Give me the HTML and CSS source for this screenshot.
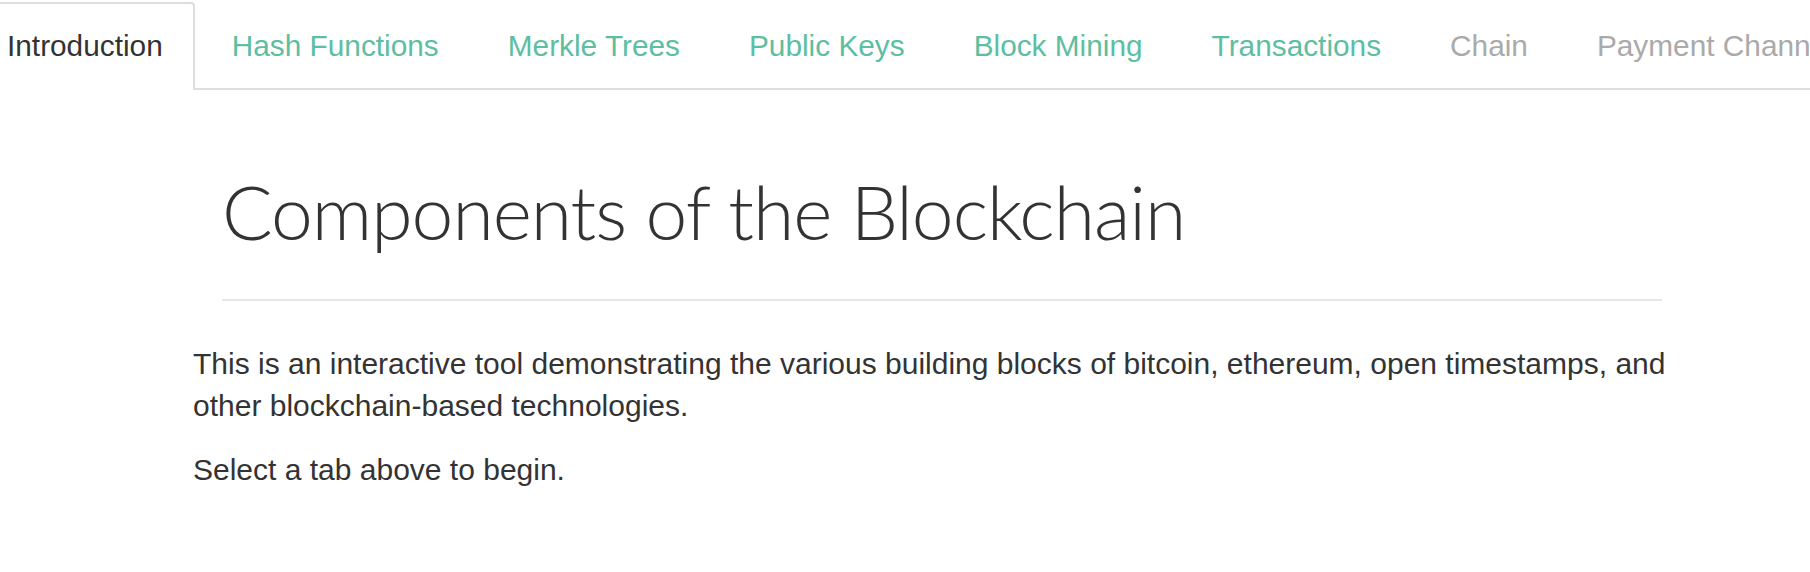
FILE: index.html
```html
<!DOCTYPE html>
<html lang="en">
<head>
  <meta charset="UTF-8">
  <meta name="viewport" content="width=device-width, initial-scale=1.0">
  <title>Blockchain Demo</title>
  <link rel="stylesheet" href="styles.css">
</head>

<body>
<ul class="tabs">
  <li class="active"><a href="#">Introduction</a></li>
  <li><a href="#">Hash Functions</a></li>
  <li><a href="#">Merkle Trees</a></li>
  <li><a href="#">Public Keys</a></li>
  <li><a href="#">Block Mining</a></li>
  <li><a href="#">Transactions</a></li>
  <li class="disabled"><a href="#">Chain</a></li>
  <li class="disabled"><a href="#">Payment Channels</a></li>
</ul>

<div class="content">
  <div class="page-header">
    <h1>Components of the Blockchain</h1>
  </div>
  <p>This is an interactive tool demonstrating the various building blocks of bitcoin, ethereum, open timestamps, and other blockchain-based technologies.</p>
  <p>Select a tab above to begin.</p>
</div>
</body>
</html>
```

FILE: styles.css
```css
body {
  margin: 0;
  font-family: "Liberation Sans", Arial, sans-serif;
  color: #333;
  overflow: hidden;
}
.tabs {
  display: flex;
  list-style: none;
  margin: 2px 0 0 -25px;
  padding: 0;
  border-bottom: 2px solid #ddd;
  white-space: nowrap;
}
.tabs li {
  margin: 0 5px -2px 0;
}
.tabs a {
  display: block;
  padding: 21px 30px;
  font-size: 29.8px;
  line-height: 42px;
  color: #5dbea1;
  text-decoration: none;
  border: 2px solid transparent;
  border-bottom: none;
  border-radius: 4px 4px 0 0;
}
.tabs .active a {
  color: #333;
  border-color: #ddd;
  background: #fff;
  padding-bottom: 23px;
}
.tabs .disabled a {
  color: #aaa;
}
.content {
  width: 1498px;
  padding-left: 193px;
}
.page-header {
  margin: 80px 29px 42px;
  padding-bottom: 46px;
  border-bottom: 2px solid #e6e6e6;
}
h1 {
  margin: 0;
  font-family: Lato, "Open Sans", sans-serif;
  font-weight: 300;
  font-size: 75px;
  letter-spacing: -1px;
  line-height: 1.1;
}
p {
  margin: 0 0 21px;
  font-size: 30px;
  line-height: 42.5px;
}
```
